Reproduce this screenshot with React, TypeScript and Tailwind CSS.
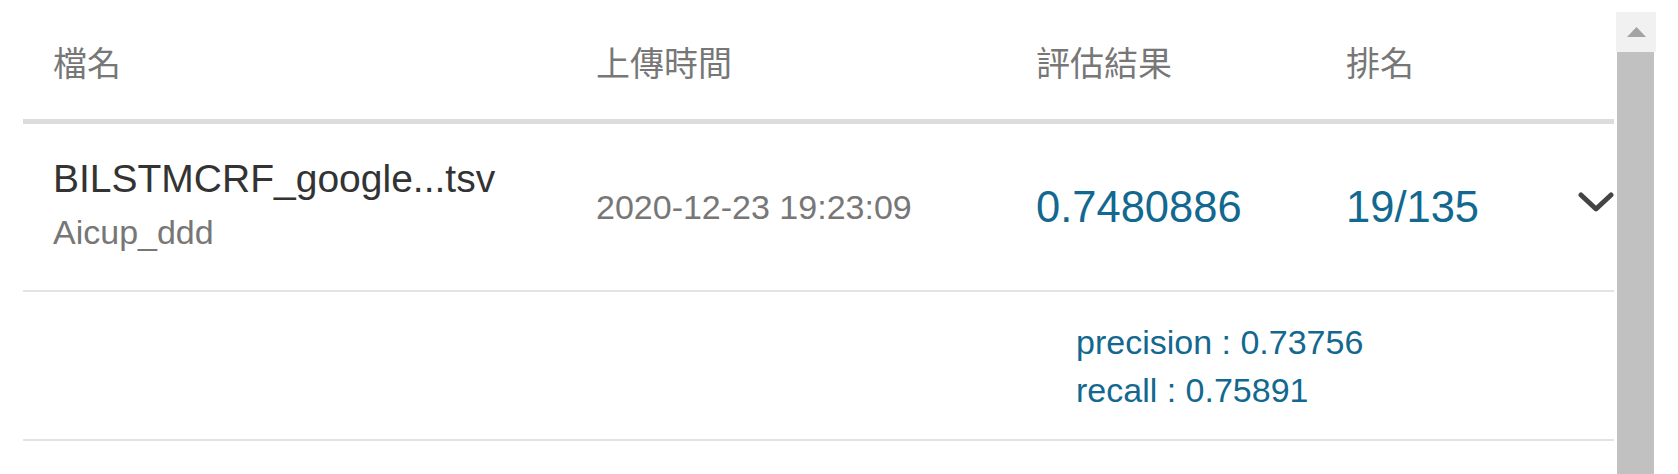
import React from "react";

const FONT = { fontFamily: '"Liberation Sans", Arial, "Noto Sans CJK TC", sans-serif' };

function Chevron() {
  return (
    <svg width="36" height="20" viewBox="0 0 36 20" fill="none">
      <polyline points="3,3 18,17 33,3" stroke="#444444" strokeWidth="5" strokeLinecap="round" strokeLinejoin="round" />
    </svg>
  );
}

function Scrollbar() {
  return (
    <div className="mt-[12px] flex w-[40px] flex-col">
      <div className="flex h-[40px] items-center justify-center bg-[#f1f1f1]">
        <svg width="19" height="10" viewBox="0 0 19 10">
          <polygon points="9.5,0 19,10 0,10" fill="#a3a3a3" />
        </svg>
      </div>
      <div className="ml-[1px] mr-[2px] flex-1 bg-[#c1c1c1]" />
    </div>
  );
}

export default function App() {
  return (
    <div className="flex h-[474px] w-[1678px] overflow-hidden bg-white pl-[23px] pr-[22px]" style={FONT}>
      <div className="flex w-[1591px] flex-col">
        {/* header */}
        <div className="flex h-[124px] border-b-[5px] border-[#dcdcdc] pt-[44px] text-[34px] leading-[40px] text-[#777777]">
          <div className="w-[573px] pl-[30px]">檔名</div>
          <div className="w-[440px]">上傳時間</div>
          <div className="w-[310px]">評估結果</div>
          <div className="w-[232px]">排名</div>
        </div>
        {/* row */}
        <div className="flex h-[168px] border-b-[2px] border-[#e3e3e3]">
          <div className="w-[573px] pl-[30px] pt-[32px]">
            <div className="text-[39px] leading-[46px] text-[#333333]">BILSTMCRF_google...tsv</div>
            <div className="mt-[10px] text-[34px] leading-[40px] text-[#777777]">Aicup_ddd</div>
          </div>
          <div className="w-[440px] pt-[63px] text-[34px] leading-[40px] text-[#777777]">2020-12-23 19:23:09</div>
          <div className="w-[310px] pt-[58px] text-[43.5px] leading-[50px] text-[#13688f]">0.7480886</div>
          <div className="w-[232px] pt-[58px] text-[43.5px] leading-[50px] text-[#13688f]">19/135</div>
          <div className="w-[36px] pt-[68px]">
            <Chevron />
          </div>
        </div>
        {/* expanded */}
        <div className="flex h-[149px] border-b-[2px] border-[#e3e3e3]">
          <div className="w-[1053px]" />
          <div className="pt-[26px] text-[34px] leading-[48px] text-[#13688f]">
            <div>precision : 0.73756</div>
            <div>recall : 0.75891</div>
          </div>
        </div>
      </div>
      <div className="w-[2px]" />
      <Scrollbar />
    </div>
  );
}
